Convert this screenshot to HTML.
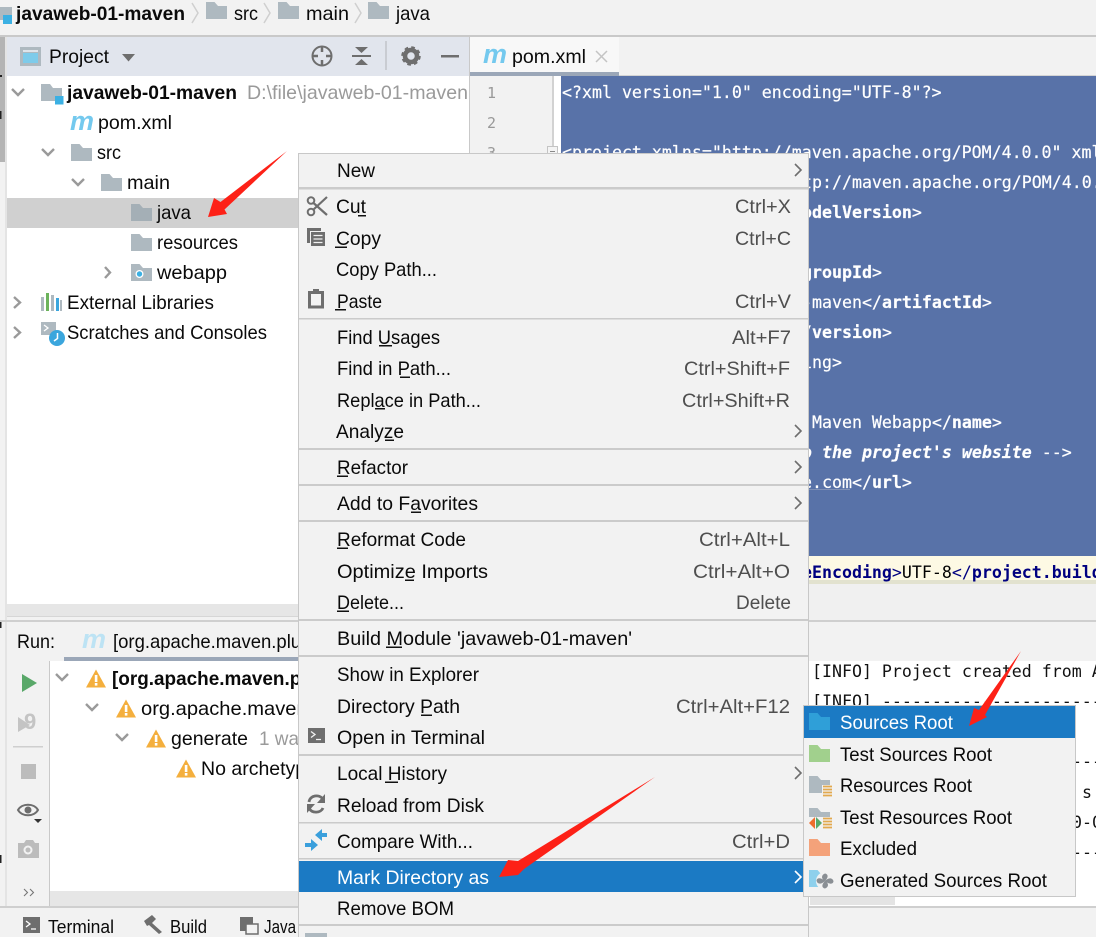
<!DOCTYPE html>
<html><head><meta charset="utf-8">
<style>
html,body{margin:0;padding:0;background:#f2f2f2;width:1096px;height:937px;overflow:hidden}
svg{display:block;position:absolute;left:0;top:0}
text{font-family:"Liberation Sans",sans-serif;font-size:19.5px;fill:#0a0a0a;white-space:pre}
.b{font-weight:bold}
.g{fill:#9a9a9a}
.s{fill:#4f4f4f}
.w{fill:#fff}
.c{font-family:"DejaVu Sans Mono","Liberation Mono",monospace;font-size:16.6px;fill:#fff;stroke:#fff;stroke-width:.2}
.c .t{font-weight:bold}
.y{font-family:"DejaVu Sans Mono","Liberation Mono",monospace;font-size:16.6px;fill:#000}
.y .n{fill:#000080}
.y .t{font-weight:bold;fill:#000080}
.k{font-family:"DejaVu Sans Mono","Liberation Mono",monospace;font-size:16.6px;fill:#111}
.ch{fill:none;stroke:#9a9a9a;stroke-width:2.4}
.ar{fill:none;stroke:#6e6e6e;stroke-width:1.6}
.sep{fill:#cbcbcb}
</style></head><body>
<svg width="1096" height="937" viewBox="0 0 1096 937" xmlns="http://www.w3.org/2000/svg">
<defs>
<path id="f" d="M0 0H8.5L12 4H21V17H0Z"/>
<path id="w" d="M10 0.5L20 18.5H0Z"/>
<g id="warn"><use href="#w" fill="#f4af3d"/><rect x="8.8" y="6" width="2.6" height="7" fill="#fff"/><rect x="8.8" y="14" width="2.6" height="2.6" fill="#fff"/></g>
</defs>
<!-- base -->
<rect width="1096" height="937" fill="#f2f2f2"/>
<!-- breadcrumb -->
<rect x="0" y="35" width="1096" height="2" fill="#c9c9c9"/>
<path d="M0 7H12V15H3V20H0Z" fill="#aeb9c0"/><rect x="3" y="15" width="9" height="9" fill="#3bb0e3"/>
<text x="16" y="20" class="b" textLength="169" lengthAdjust="spacingAndGlyphs">javaweb-01-maven</text>
<path d="M192 3L198 13L192 23" fill="none" stroke="#cfcfcf" stroke-width="1.5"/>
<use href="#f" x="206" y="2" fill="#aeb9c0"/>
<text x="234" y="20" textLength="24" lengthAdjust="spacingAndGlyphs">src</text>
<path d="M264 3L270 13L264 23" fill="none" stroke="#cfcfcf" stroke-width="1.5"/>
<use href="#f" x="278" y="2" fill="#aeb9c0"/>
<text x="306" y="20" textLength="43" lengthAdjust="spacingAndGlyphs">main</text>
<path d="M355 3L361 13L355 23" fill="none" stroke="#cfcfcf" stroke-width="1.5"/>
<use href="#f" x="368" y="2" fill="#aeb9c0"/>
<text x="396" y="20" textLength="34" lengthAdjust="spacingAndGlyphs">java</text>
<!-- left strip -->
<rect x="0" y="37" width="5" height="125" fill="#b4b4b4"/>
<rect x="5" y="37" width="2" height="870" fill="#e4e4e4"/>
<rect x="0" y="75" width="2" height="2" fill="#222"/><rect x="0" y="111" width="1.5" height="8" fill="#222"/>
<rect x="0" y="620" width="1.5" height="8" fill="#222"/><rect x="0" y="855" width="1.5" height="8" fill="#222"/>
<!-- project header -->
<rect x="7" y="37" width="462" height="39" fill="#e1e5ed"/>
<rect x="20" y="47" width="21" height="19" fill="#aeb9c0"/><rect x="23" y="53" width="15" height="10" fill="#7ecbea"/><rect x="23" y="50" width="15" height="2" fill="#dfe4ea"/>
<text x="49" y="63" textLength="60" lengthAdjust="spacingAndGlyphs" fill="#222">Project</text>
<path d="M122 54H135L128.500 61.500Z" fill="#6e6e6e"/>
<circle cx="322" cy="56" r="9.500" fill="none" stroke="#6e6e6e" stroke-width="2"/>
<path d="M322 46V52M322 60V66M312 56H318M326 56H332" stroke="#6e6e6e" stroke-width="2.500"/>
<rect x="352" y="55" width="19" height="2" fill="#6e6e6e"/>
<path d="M355 47H368L361.500 53ZM355 65H368L361.500 59Z" fill="#6e6e6e"/>
<rect x="385" y="41" width="2" height="29" fill="#c9ccd2"/>
<circle cx="411" cy="56" r="6" fill="none" stroke="#6e6e6e" stroke-width="4.500"/>
<circle cx="411" cy="56" r="8.500" fill="none" stroke="#6e6e6e" stroke-width="2.500" stroke-dasharray="3.600 3.070"/>
<rect x="441" y="55" width="18" height="2.500" fill="#6e6e6e"/>
<!-- tree -->
<rect x="7" y="76" width="462" height="528" fill="#fff"/>
<rect x="469" y="37" width="1" height="585" fill="#c9c9c9"/>
<rect x="7" y="198" width="292" height="30" fill="#d0d0d0"/>
<path class="ch" d="M12 89L18 95L24 89"/>
<path d="M41 84H50L53 88H62V101H41Z" fill="#aeb9c0"/><rect x="55" y="96" width="8.500" height="8.500" fill="#3bb0e3"/>
<text x="67" y="99" class="b" textLength="170" lengthAdjust="spacingAndGlyphs">javaweb-01-maven</text>
<text x="247" y="99" class="g" textLength="221" lengthAdjust="spacingAndGlyphs">D:\file\javaweb-01-maven</text>
<text x="70" y="130" style="font-size:27px;font-weight:bold;font-style:italic;fill:#74c9ee" textLength="24" lengthAdjust="spacingAndGlyphs">m</text>
<text x="98" y="129" textLength="74" lengthAdjust="spacingAndGlyphs">pom.xml</text>
<path class="ch" d="M42 149L48 155L54 149"/>
<use href="#f" x="71" y="144" fill="#aeb9c0"/>
<text x="97" y="159" textLength="24" lengthAdjust="spacingAndGlyphs">src</text>
<path class="ch" d="M72 179L78 185L84 179"/>
<use href="#f" x="101" y="174" fill="#aeb9c0"/>
<text x="127" y="189" textLength="43" lengthAdjust="spacingAndGlyphs">main</text>
<use href="#f" x="131" y="204" fill="#a4afb6"/>
<text x="157" y="219" textLength="34" lengthAdjust="spacingAndGlyphs">java</text>
<use href="#f" x="131" y="234" fill="#aeb9c0"/>
<text x="157" y="249" textLength="81" lengthAdjust="spacingAndGlyphs">resources</text>
<path class="ch" d="M105 267L110 272.500L105 278"/>
<use href="#f" x="131" y="264" fill="#aeb9c0"/><circle cx="139.500" cy="274" r="4" fill="#fff"/><circle cx="139.500" cy="274" r="2.700" fill="#3bb0e3"/>
<text x="157" y="279" textLength="70" lengthAdjust="spacingAndGlyphs">webapp</text>
<path class="ch" d="M14 297L20 302.500L14 308"/>
<rect x="41" y="297" width="3" height="14" fill="#aeb9c0"/><rect x="46" y="293" width="3" height="18" fill="#6cb35c"/><rect x="51" y="295" width="3" height="16" fill="#aeb9c0"/><rect x="56" y="298" width="3" height="13" fill="#3ba6dd"/><rect x="60" y="300" width="2" height="11" fill="#aeb9c0"/>
<text x="67" y="309" textLength="147" lengthAdjust="spacingAndGlyphs">External Libraries</text>
<path class="ch" d="M14 327L20 332.500L14 338"/>
<rect x="41" y="322" width="15" height="13" fill="#aeb9c0"/><path d="M44 325L48 328L44 331" fill="none" stroke="#fff" stroke-width="1.300"/>
<circle cx="57" cy="338" r="8" fill="#3ba6dd"/><path d="M57.500 333V338.500L54 341" fill="none" stroke="#fff" stroke-width="1.500"/>
<text x="67" y="339" textLength="200" lengthAdjust="spacingAndGlyphs">Scratches and Consoles</text>
<rect x="7" y="604" width="463" height="13" fill="#e6e6e6"/>
<rect x="7" y="616" width="463" height="1" fill="#d6d6d6"/>
<!-- editor tabs -->
<rect x="470" y="37" width="149" height="35" fill="#f8f8f8"/>
<rect x="470" y="72" width="149" height="4" fill="#9ba7b8"/>
<rect x="619" y="75" width="477" height="1" fill="#d4d4d4"/>
<text x="483" y="63" style="font-size:27px;font-weight:bold;font-style:italic;fill:#74c9ee" textLength="24" lengthAdjust="spacingAndGlyphs">m</text>
<text x="512" y="63" textLength="74" lengthAdjust="spacingAndGlyphs">pom.xml</text>
<path d="M596 51L607 62M607 51L596 62" stroke="#c4c4c4" stroke-width="1.500"/>
<!-- gutter + editor -->
<rect x="470" y="76" width="82" height="508" fill="#f2f2f2"/>
<rect x="552" y="76" width="2" height="508" fill="#d2d2d2"/>
<rect x="554" y="76" width="7" height="508" fill="#fff"/>
<text x="487" y="98" style="font-family:'DejaVu Sans Mono',monospace;font-size:15px;fill:#999">1</text>
<text x="487" y="128" style="font-family:'DejaVu Sans Mono',monospace;font-size:15px;fill:#999">2</text>
<text x="487" y="158" style="font-family:'DejaVu Sans Mono',monospace;font-size:15px;fill:#999">3</text>
<rect x="561" y="76" width="535" height="480" fill="#5872a8"/>
<rect x="547.500" y="146.500" width="10" height="10" fill="#f4f4f4" stroke="#c4c4c4"/>
<rect x="550" y="151" width="5" height="1" fill="#888"/>
<text x="562" y="98" class="c">&lt;?xml version="1.0" encoding="UTF-8"?&gt;</text>
<text x="562" y="158" class="c">&lt;project xmlns="http://maven.apache.org/POM/4.0.0" xml</text>
<text x="802" y="188" class="c">tp://maven.apache.org/POM/4.0.</text>
<text x="802" y="218" class="c"><tspan class="t">odelVersion</tspan>&gt;</text>
<text x="802" y="278" class="c"><tspan class="t">groupId</tspan>&gt;</text>
<text x="802" y="308" class="c">-maven&lt;/<tspan class="t">artifactId</tspan>&gt;</text>
<text x="802" y="338" class="c">/<tspan class="t">version</tspan>&gt;</text>
<text x="802" y="368" class="c">ing&gt;</text>
<text x="802" y="428" class="c"> Maven Webapp&lt;/<tspan class="t">name</tspan>&gt;</text>
<text x="802" y="458" class="c"><tspan style="font-weight:bold;font-style:italic">o the project's website</tspan> --&gt;</text>
<text x="802" y="488" class="c">e.com&lt;/<tspan class="t">url</tspan>&gt;</text>
<rect x="809" y="489" width="41" height="1" fill="#7f90b6"/>
<rect x="561" y="556" width="535" height="24" fill="#fdf9e4"/>
<rect x="561" y="580" width="535" height="4" fill="#e2e2cf"/>
<text x="802" y="578" class="y"><tspan class="t">eEncoding</tspan><tspan class="n">&gt;</tspan>UTF-8<tspan class="n">&lt;/</tspan><tspan class="t">project.build</tspan></text>
<rect x="470" y="584" width="626" height="36" fill="#f0f0f0"/>
<rect x="0" y="620" width="1096" height="2" fill="#cfcfcf"/>
<!-- run panel -->
<rect x="7" y="622" width="1089" height="39" fill="#f2f2f2"/>
<text x="17" y="648" textLength="38" lengthAdjust="spacingAndGlyphs" fill="#222">Run:</text>
<text x="82" y="648" style="font-size:27px;font-weight:bold;font-style:italic;fill:#bde3f4" textLength="24" lengthAdjust="spacingAndGlyphs">m</text>
<text x="113" y="648" fill="#333" textLength="222" lengthAdjust="spacingAndGlyphs">[org.apache.maven.plugins</text>
<rect x="64" y="657" width="240" height="4" fill="#9ba7b8"/>
<rect x="49" y="661" width="1" height="245" fill="#c9c9c9"/>
<rect x="50" y="661" width="250" height="230" fill="#fff"/>
<rect x="50" y="891" width="250" height="15" fill="#e6e6e6"/>
<path class="ch" d="M56 674L62 680L68 674"/>
<use href="#warn" x="86" y="669"/>
<text x="112" y="685" class="b" textLength="245" lengthAdjust="spacingAndGlyphs">[org.apache.maven.plugins</text>
<path class="ch" d="M86 704L92 710L98 704"/>
<use href="#warn" x="116" y="699"/>
<text x="141" y="715" textLength="226" lengthAdjust="spacingAndGlyphs">org.apache.maven.plugin</text>
<path class="ch" d="M116 734L122 740L128 734"/>
<use href="#warn" x="146" y="729"/>
<text x="171" y="745" textLength="77" lengthAdjust="spacingAndGlyphs">generate</text>
<text x="259" y="745" class="g" textLength="40" lengthAdjust="spacingAndGlyphs">1 wa</text>
<use href="#warn" x="176" y="759"/>
<text x="201" y="775" textLength="116" lengthAdjust="spacingAndGlyphs">No archetype</text>
<!-- run toolbar -->
<path d="M22 674L37 683L22 692Z" fill="#59a869"/>
<path d="M18 717L30 725L18 732Z" fill="#c4c4c4"/>
<text x="24" y="729" style="font-size:22px;font-weight:bold;fill:#c4c4c4">9</text>
<rect x="13" y="746" width="30" height="1.500" fill="#cfcfcf"/>
<rect x="21" y="764" width="15" height="15" fill="#bcbcbc"/>
<path d="M18 810C22 803 34 803 38 810C34 817 22 817 18 810Z" fill="none" stroke="#6e6e6e" stroke-width="2"/>
<circle cx="28" cy="810" r="3.500" fill="#6e6e6e"/>
<path d="M34 819H42L38 823Z" fill="#333"/>
<path d="M18 843H24L26 840H33L35 843H39V858H18Z" fill="#bcbcbc"/>
<circle cx="28" cy="850" r="4.500" fill="#f2f2f2"/><circle cx="28" cy="850" r="2.500" fill="#bcbcbc"/>
<path d="M24 889L27.500 892.500L24 896M30 889L33.500 892.500L30 896" fill="none" stroke="#777" stroke-width="1.100"/>
<!-- console -->
<rect x="809" y="661" width="287" height="245" fill="#fff"/>
<text x="812" y="677" class="k">[INFO] Project created from A</text>
<text x="812" y="707" class="k">[INFO] ----------------------</text>
<text x="1072" y="767" class="k">---</text>
<text x="1082" y="798" class="k">s</text>
<text x="1072" y="828" class="k">0-0</text>
<text x="1072" y="858" class="k">---</text>
<rect x="810" y="896" width="85" height="9" fill="#e4e4e4"/>
<rect x="0" y="906" width="1096" height="2" fill="#cfcfcf"/>
<!-- bottom bar -->
<rect x="23" y="917" width="17" height="16" fill="#6e6e6e"/><path d="M26 921L30 924L26 927M31 929H36" fill="none" stroke="#fff" stroke-width="1.300"/>
<text x="48" y="933" style="font-size:18px" textLength="66" lengthAdjust="spacingAndGlyphs">Terminal</text>
<path d="M144 921L152 915L156 919L152 923L162 932L159 934L149 925L147 926Z" fill="#6e6e6e"/>
<text x="170" y="933" style="font-size:18px" textLength="37" lengthAdjust="spacingAndGlyphs">Build</text>
<rect x="240" y="917" width="13" height="14" fill="#6e6e6e"/><rect x="246" y="924" width="12" height="10" fill="#f2f2f2" stroke="#6e6e6e" stroke-width="1.500"/>
<text x="264" y="933" style="font-size:18px" textLength="32" lengthAdjust="spacingAndGlyphs">Java</text>
<!-- main context menu -->
<rect x="298.500" y="153.500" width="510" height="790" fill="#f2f2f2" stroke="#c8c8c8"/>
<rect x="299" y="187" width="509" height="2.500" class="sep"/>
<rect x="299" y="318" width="509" height="1.500" class="sep"/>
<rect x="299" y="448" width="509" height="2" class="sep"/>
<rect x="299" y="484" width="509" height="2" class="sep"/>
<rect x="299" y="520" width="509" height="2" class="sep"/>
<rect x="299" y="619" width="509" height="2" class="sep"/>
<rect x="299" y="655" width="509" height="2" class="sep"/>
<rect x="299" y="754" width="509" height="2" class="sep"/>
<rect x="299" y="822" width="509" height="1.500" class="sep"/>
<rect x="299" y="858" width="509" height="1.500" class="sep"/>
<rect x="299" y="924" width="509" height="2" class="sep"/>
<rect x="299" y="861" width="509" height="31" fill="#1b7ac4"/>

<text x="337" y="177" textLength="38" lengthAdjust="spacingAndGlyphs">New</text>
<text x="336" y="213" textLength="30" lengthAdjust="spacingAndGlyphs">Cut</text>
<text x="336" y="245" textLength="45" lengthAdjust="spacingAndGlyphs">Copy</text>
<text x="336" y="276" textLength="101" lengthAdjust="spacingAndGlyphs">Copy Path...</text>
<text x="337" y="308" textLength="45" lengthAdjust="spacingAndGlyphs">Paste</text>
<text x="337" y="344" textLength="103" lengthAdjust="spacingAndGlyphs">Find Usages</text>
<text x="337" y="375" textLength="114" lengthAdjust="spacingAndGlyphs">Find in Path...</text>
<text x="337" y="407" textLength="144" lengthAdjust="spacingAndGlyphs">Replace in Path...</text>
<text x="336" y="438" textLength="68" lengthAdjust="spacingAndGlyphs">Analyze</text>
<text x="337" y="474" textLength="71" lengthAdjust="spacingAndGlyphs">Refactor</text>
<text x="337" y="510" textLength="141" lengthAdjust="spacingAndGlyphs">Add to Favorites</text>
<text x="337" y="546" textLength="129" lengthAdjust="spacingAndGlyphs">Reformat Code</text>
<text x="337" y="578" textLength="151" lengthAdjust="spacingAndGlyphs">Optimize Imports</text>
<text x="337" y="609" textLength="67" lengthAdjust="spacingAndGlyphs">Delete...</text>
<text x="337" y="645" textLength="295" lengthAdjust="spacingAndGlyphs">Build Module 'javaweb-01-maven'</text>
<text x="337" y="681" textLength="142" lengthAdjust="spacingAndGlyphs">Show in Explorer</text>
<text x="337" y="713" textLength="123" lengthAdjust="spacingAndGlyphs">Directory Path</text>
<text x="337" y="744" textLength="148" lengthAdjust="spacingAndGlyphs">Open in Terminal</text>
<text x="337" y="780" textLength="110" lengthAdjust="spacingAndGlyphs">Local History</text>
<text x="337" y="812" textLength="147" lengthAdjust="spacingAndGlyphs">Reload from Disk</text>
<text x="337" y="848" textLength="136" lengthAdjust="spacingAndGlyphs">Compare With...</text>
<text x="337" y="884" class="w" textLength="152" lengthAdjust="spacingAndGlyphs">Mark Directory as</text>
<text x="337" y="915" textLength="117" lengthAdjust="spacingAndGlyphs">Remove BOM</text>
<!-- mnemonic underlines -->
<g fill="#111">
<rect x="358" y="215" width="8" height="1.500"/>
<rect x="335" y="246.500" width="12" height="1.500"/>
<rect x="335" y="309" width="11" height="1.500"/>
<rect x="379" y="345" width="13" height="1.500"/>
<rect x="400" y="376.500" width="10" height="1.500"/>
<rect x="375" y="408" width="10" height="1.500"/>
<rect x="385" y="439.500" width="9" height="1.500"/>
<rect x="337" y="475.500" width="11" height="1.500"/>
<rect x="411" y="511.500" width="10" height="1.500"/>
<rect x="337" y="547.500" width="11" height="1.500"/>
<rect x="405" y="579.500" width="9" height="1.500"/>
<rect x="337" y="610.500" width="12" height="1.500"/>
<rect x="386" y="646.500" width="16" height="1.500"/>
<rect x="421" y="714.500" width="11" height="1.500"/>
<rect x="385" y="781.500" width="13" height="1.500"/>
</g>
<!-- shortcuts -->
<text x="735" y="213" class="s" textLength="56" lengthAdjust="spacingAndGlyphs">Ctrl+X</text>
<text x="735" y="245" class="s" textLength="56" lengthAdjust="spacingAndGlyphs">Ctrl+C</text>
<text x="735" y="308" class="s" textLength="56" lengthAdjust="spacingAndGlyphs">Ctrl+V</text>
<text x="732" y="344" class="s" textLength="59" lengthAdjust="spacingAndGlyphs">Alt+F7</text>
<text x="684" y="375" class="s" textLength="106" lengthAdjust="spacingAndGlyphs">Ctrl+Shift+F</text>
<text x="682" y="407" class="s" textLength="108" lengthAdjust="spacingAndGlyphs">Ctrl+Shift+R</text>
<text x="699" y="546" class="s" textLength="91" lengthAdjust="spacingAndGlyphs">Ctrl+Alt+L</text>
<text x="693" y="578" class="s" textLength="97" lengthAdjust="spacingAndGlyphs">Ctrl+Alt+O</text>
<text x="736" y="609" class="s" textLength="55" lengthAdjust="spacingAndGlyphs">Delete</text>
<text x="676" y="713" class="s" textLength="114" lengthAdjust="spacingAndGlyphs">Ctrl+Alt+F12</text>
<text x="732" y="848" class="s" textLength="58" lengthAdjust="spacingAndGlyphs">Ctrl+D</text>
<!-- submenu arrows -->
<path class="ar" d="M795 164L801 170L795 176M795 425L801 431L795 437M795 461L801 467L795 473M795 497L801 503L795 509M795 767L801 773L795 779"/>
<path d="M795 871L801 877L795 883" fill="none" stroke="#fff" stroke-width="1.600"/>
<!-- menu icons -->
<circle cx="311" cy="200.500" r="3.300" fill="none" stroke="#6e6e6e" stroke-width="2"/>
<circle cx="311" cy="212" r="3.300" fill="none" stroke="#6e6e6e" stroke-width="2"/>
<path d="M313.500 203L327 215M313.500 209.500L327 197" stroke="#6e6e6e" stroke-width="2.200"/>
<path d="M307 228H321V231H310V243H307Z" fill="#6e6e6e"/>
<rect x="311" y="232" width="14" height="14" fill="#6e6e6e"/>
<path d="M313.500 235.500H322.500M313.500 239H322.500M313.500 242.500H322.500" stroke="#f2f2f2" stroke-width="1.200"/>
<rect x="309.500" y="292.500" width="13" height="14.500" fill="none" stroke="#6e6e6e" stroke-width="3"/>
<rect x="313" y="289" width="6" height="5" fill="#6e6e6e"/>
<rect x="308" y="728" width="17" height="15" fill="#6e6e6e"/>
<path d="M311 731.500L315 734.500L311 737.500M316 739.500H321" fill="none" stroke="#f2f2f2" stroke-width="1.300"/>
<path d="M309 802C310 795 319 794 323 799M323 808C321 813 312 814 309 808" fill="none" stroke="#6e6e6e" stroke-width="2.800"/>
<path d="M325 794V803H317ZM307 813V804H315Z" fill="#6e6e6e"/>
<path d="M327 833H322V829L315 835L322 841V837H327Z" fill="#3a9fdc"/>
<path d="M305 843H311V839L318 845L311 851V847H305Z" fill="#3a9fdc"/>
<rect x="305" y="933" width="22" height="4" fill="#aeb9c0"/>
<!-- sub menu -->
<rect x="803.500" y="705.500" width="272" height="191" fill="#f2f2f2" stroke="#c8c8c8"/>
<rect x="804" y="706" width="271" height="32" fill="#1b7ac4"/>
<use href="#f" x="809" y="713" fill="#2f9fd8"/>
<text x="840" y="729" class="w" textLength="113" lengthAdjust="spacingAndGlyphs">Sources Root</text>
<use href="#f" x="809" y="745" fill="#a1d08d"/>
<text x="840" y="761" textLength="152" lengthAdjust="spacingAndGlyphs">Test Sources Root</text>
<use href="#f" x="809" y="776" fill="#aeb9c0"/>
<path d="M822 785H832V797H822Z" fill="#f2f2f2"/>
<path d="M823 786.500H832M823 789.500H832M823 792.500H832M823 795.500H832" stroke="#e2a94e" stroke-width="1.800"/>
<text x="840" y="792" textLength="132" lengthAdjust="spacingAndGlyphs">Resources Root</text>
<use href="#f" x="809" y="808" fill="#aeb9c0"/>
<rect x="809" y="817" width="23" height="12" fill="#f2f2f2"/>
<path d="M815 817V829L809 823Z" fill="#ee6c2c"/><path d="M816 817V829L822 823Z" fill="#59a869"/>
<path d="M823 818.500H832M823 821.500H832M823 824.500H832M823 827.500H832" stroke="#e2a94e" stroke-width="1.800"/>
<text x="840" y="824" textLength="172" lengthAdjust="spacingAndGlyphs">Test Resources Root</text>
<use href="#f" x="809" y="839" fill="#f4a27a"/>
<text x="840" y="855" textLength="77" lengthAdjust="spacingAndGlyphs">Excluded</text>
<use href="#f" x="809" y="870" fill="#8ed0ec"/>
<circle cx="825" cy="881" r="9" fill="#f2f2f2"/>
<path d="M825 881C821 879 821 875 825 873.500C828 874 829 877 825 881ZM825 881C829 877 833 878 833.500 881.500C833 884 830 885 825 881ZM825 881C829 883 829 887 825 888.500C822 888 821 885 825 881ZM825 881C821 885 817 884 816.500 880.500C817 878 820 877 825 881Z" fill="#8a8f94"/>
<text x="840" y="887" textLength="207" lengthAdjust="spacingAndGlyphs">Generated Sources Root</text>
<!-- red arrows -->
<path d="M287 151L220.500 202L214 198L208 217L227 214L224.500 209.500Z" fill="#fd2117"/>
<path d="M1021 651L979 710L974 708L969 726L987 717L985 715Z" fill="#fd2117"/>
<path d="M655 777L518 861L508 860L499 877L518 875L524 869Z" fill="#fd2117"/>
</svg>
</body></html>
